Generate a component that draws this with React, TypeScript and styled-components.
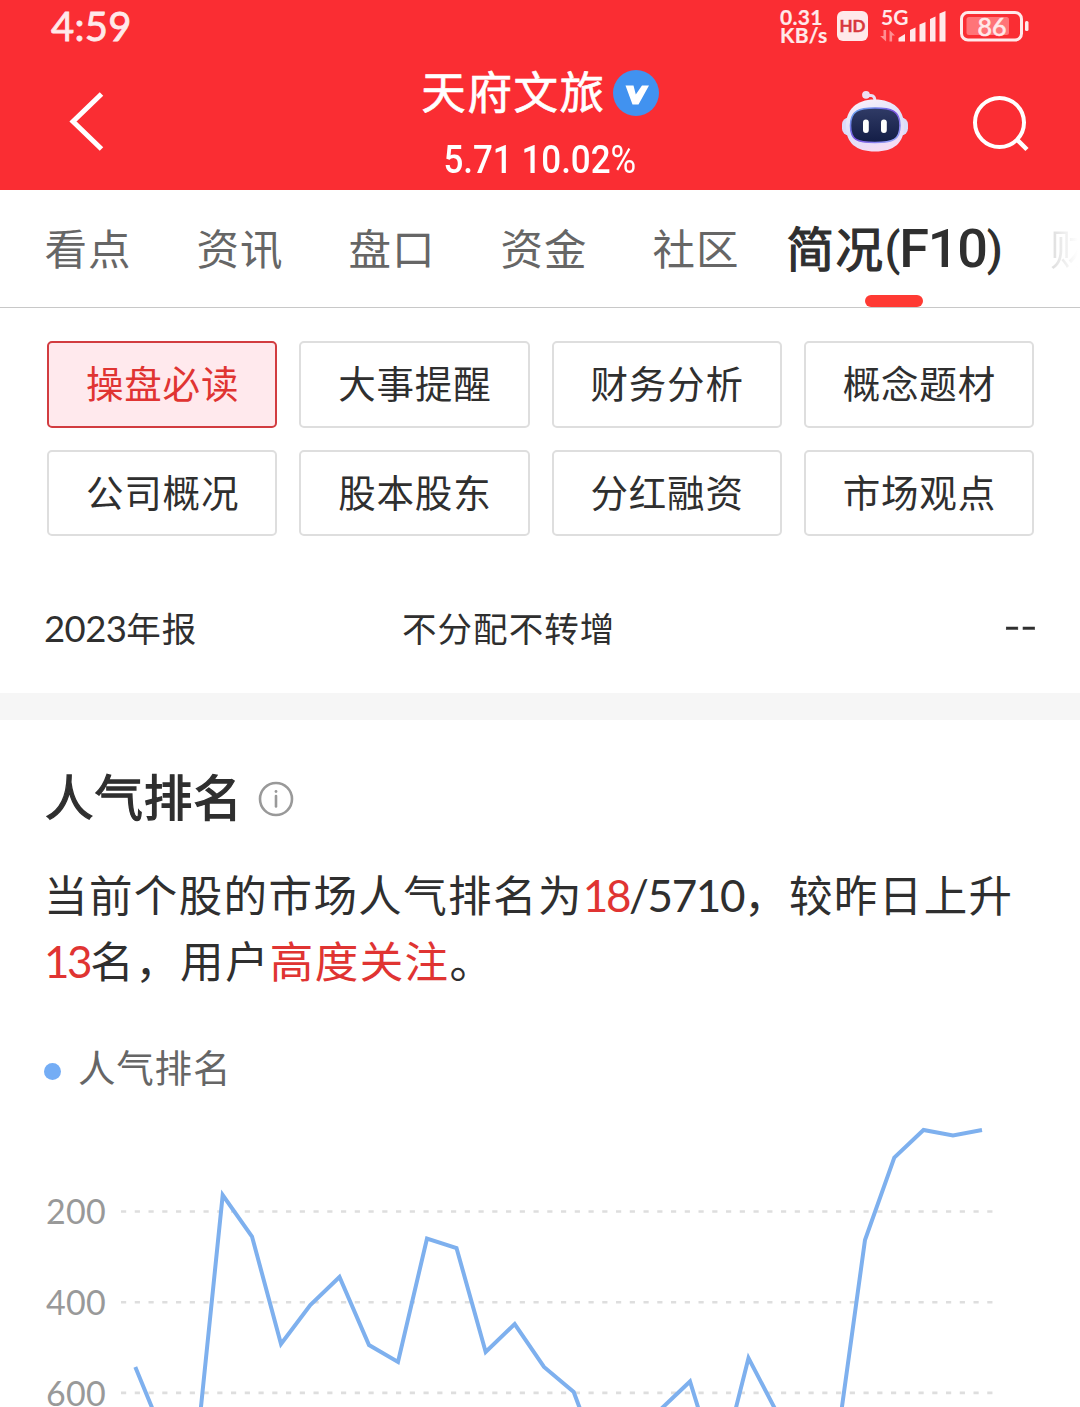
import React from 'react';
import styled, { createGlobalStyle, css } from 'styled-components';

const GlobalStyle = createGlobalStyle`
  *, *::before, *::after { box-sizing: border-box; }
  html, body { margin: 0; padding: 0; background: #fff; }
  body { overflow: hidden; }
  svg { display: block; flex: none; }
`;

const latin = `Lato, 'Noto Sans CJK SC', sans-serif`;
const cjk = `'Noto Sans CJK SC', sans-serif`;

const Screen = styled.main`
  width: 1080px;
  height: 1407px;
  overflow: hidden;
  background: #fff;
  color: #2f2f2f;
  font-family: ${cjk};
  white-space: nowrap;
`;

const Header = styled.header`
  height: 190px;
  background: #fa2d33;
  color: #fff;
`;

const StatusBar = styled.div`
  height: 52px;
  padding: 0 51px 0 51px;
  display: flex;
  justify-content: space-between;
  align-items: center;
  color: #ffe9ea;
  font-family: ${latin};
`;

const Clock = styled.span`
  font-size: 40px;
  line-height: 52px;
  font-weight: 400;
  letter-spacing: 0.3px;
  -webkit-text-stroke: 0.8px currentColor;
`;

const StatusIcons = styled.div`
  display: flex;
  align-items: center;
  height: 52px;
`;

const NetSpeed = styled.div`
  width: 57px;
  font-size: 21px;
  line-height: 18px;
  font-weight: 700;
  letter-spacing: 0.3px;
  -webkit-text-stroke: 0.2px currentColor;
`;

const SignalSlot = styled.div`
  margin: 0 12px 0 11px;
`;

const NavBar = styled.div`
  height: 138px;
  display: grid;
  grid-template-columns: 1fr auto 1fr;
`;

const NavLeft = styled.div`
  padding: 40px 0 0 69px;
`;

const NavRight = styled.div`
  padding: 38px 50px 0 0;
  display: flex;
  justify-content: flex-end;
  gap: 64px;

  svg + svg { margin-top: 4px; }
`;

const NavTitle = styled.div`
  display: flex;
  flex-direction: column;
  align-items: center;
`;

const StockName = styled.div`
  display: flex;
  align-items: center;
  gap: 7px;
  height: 82px;
`;

const StockNameText = styled.span`
  margin-top: -6px;
  font-size: 44.5px;
  line-height: 70px;
  font-weight: 400;
  letter-spacing: 1.6px;
  -webkit-text-stroke: 0.7px currentColor;
`;

const StockQuote = styled.div`
  font-family: Roboto, sans-serif;
  font-size: 38px;
  line-height: 50px;
  font-weight: 500;
  margin: 1px -10px 0;
  transform: scaleX(0.92);
`;

const Percent = styled.span`
  font-weight: 400;
`;

const Tabs = styled.nav`
  height: 118px;
  padding-left: 12px;
  display: flex;
  border-bottom: 1px solid #c8c8c8;
  overflow: hidden;
`;

const Tab = styled.div<{ $active?: boolean; $faded?: boolean }>`
  flex: none;
  display: flex;
  flex-direction: column;
  align-items: center;
  justify-content: space-between;
  padding: 0 32.5px;
  font-size: 42.5px;
  letter-spacing: 1px;
  color: #666;
  ${p => p.$active && css`
    padding: 0;
    width: 244px;
    font-size: 47.5px;
    letter-spacing: 1.5px;
    color: #2f2f2f;
    -webkit-text-stroke: 1.2px currentColor;
  `}
  ${p => p.$faded && css`
    padding-left: 34px;
    background: linear-gradient(90deg, #dcdcdc 34px, #fff 62px);
    background-clip: text;
    color: transparent;
  `}
`;

const TabLabel = styled.span`
  height: 105px;
  line-height: 113px;
`;

const TabCode = styled.span`
  font-family: Roboto, sans-serif;
  font-size: 54px;
  line-height: 0;
  font-weight: 500;
  letter-spacing: -1.2px;
  -webkit-text-stroke: 0;
`;

const Paren = styled.span`
  font-size: 46px;
  line-height: 0;
  vertical-align: 2px;
`;

const TabMarker = styled.i`
  width: 58px;
  height: 12px;
  border-radius: 6px;
  background: #ff3a33;
`;

const Shortcuts = styled.section`
  padding: 33px 46px 0 47px;
  display: grid;
  grid-template-columns: repeat(4, 1fr);
  grid-template-rows: 87px 86px;
  gap: 22px;
`;

const Shortcut = styled.button<{ $active?: boolean }>`
  padding: 0 0 5px 1px;
  border: 2px solid ${p => (p.$active ? '#d23c40' : '#dedede')};
  border-radius: 5px;
  background: ${p => (p.$active ? '#ffe9ed' : '#fff')};
  color: ${p => (p.$active ? '#e03432' : '#2f2f2f')};
  font: 400 37.5px/1 ${cjk};
  letter-spacing: 0.85px;
`;

const ReportRow = styled.div`
  height: 157px;
  padding: 66px 43px 0 45px;
  display: grid;
  grid-template-columns: 357px 1fr auto;
  font-size: 34.5px;
  line-height: 50px;
  letter-spacing: 1.05px;
`;

const YearDigits = styled.span`
  margin-left: -1px;
  font-family: Lato, sans-serif;
  font-size: 36.5px;
  line-height: 0;
  letter-spacing: -0.6px;
`;

const Dashes = styled.span`
  margin: -4px -1px 0 0;
  transform: scaleX(1.3);
  transform-origin: right;
  -webkit-text-stroke: 0.5px currentColor;
`;

const Band = styled.div`
  height: 27px;
  background: #f6f6f6;
`;

const Popularity = styled.section`
  padding-left: 45px;
`;

const SectionTitle = styled.h2`
  margin: 0;
  height: 113px;
  padding-top: 40px;
  display: flex;
  align-items: flex-start;
  gap: 15px;
  font-size: 48.5px;
  line-height: 70px;
  font-weight: 400;
  letter-spacing: 0.9px;
  -webkit-text-stroke: 1.3px currentColor;

  svg { margin-top: 21px; }
`;

const Summary = styled.p`
  margin: 0 0 0 -1px;
  height: 160px;
  padding-top: 28px;
  font-size: 43.5px;
  line-height: 66px;
  letter-spacing: 1.4px;
`;

const Figure = styled.span<{ $tight?: boolean }>`
  font-family: Lato, sans-serif;
  font-size: 44px;
  line-height: 0;
  letter-spacing: ${p => (p.$tight ? '-2.4px' : '-1.4px')};
`;

const Hot = styled.span`
  color: #e03432;
`;

const Legend = styled.div`
  height: 107px;
  padding: 44px 0 3px;
  display: flex;
  align-items: center;
  gap: 17px;
  font-size: 37.5px;
  line-height: 60px;
  letter-spacing: 0.8px;
  color: #666;
`;

const LegendText = styled.span`
  margin-top: -2px;
`;

const LegendDot = styled.i`
  width: 17px;
  height: 17px;
  margin: 9px 0 0 -1px;
  border-radius: 50%;
  background: #74adf5;
`;

const AxisText = styled.text`
  font-family: Lato, sans-serif;
  font-size: 34px;
  letter-spacing: 0.3px;
  text-anchor: end;
  fill: #999;
`;

const TABS = ['看点', '资讯', '盘口', '资金', '社区'];
const SHORTCUTS = ['操盘必读', '大事提醒', '财务分析', '概念题材', '公司概况', '股本股东', '分红融资', '市场观点'];

const RANK_POINTS: [number, number][] = [
  [135.3, 1367], [164.5, 1438], [193.8, 1477], [222.7, 1195], [252, 1236.5], [281, 1344], [310.3, 1305],
  [339.5, 1277], [369, 1345], [398, 1362], [427, 1238.5], [456.5, 1248], [485.7, 1352], [514.7, 1324],
  [544, 1367], [573.7, 1392], [603, 1470], [632, 1440], [661, 1409], [690, 1381.5], [719, 1475],
  [748.5, 1358], [777.7, 1414], [807, 1470], [836, 1450], [865, 1240], [894.3, 1157.5], [923.5, 1130],
  [953, 1135.5], [982, 1130],
];
const CHART_TOP = 1100;

const HdBadge = () => (
  <svg width="31" height="30" viewBox="0 0 31 30">
    <rect width="31" height="30" rx="6" fill="#ffe9ea" />
    <text x="15.5" y="21" textAnchor="middle" fontFamily="Lato, sans-serif" fontWeight="700" fontSize="17" fill="#d8383d" stroke="#d8383d" strokeWidth="0.4">HD</text>
  </svg>
);

const Signal = () => (
  <svg width="68" height="40" viewBox="879 6 68 40">
    <text x="881" y="24.500" fontFamily="Lato, sans-serif" fontWeight="700" fontSize="21" fill="#ffe9ea">5G</text>
    <g fill="#ff8e91">
      <path d="M883.500 30h2.600v11.500l-6-5.500h3.400zM889.500 41.500V30l5.500 5.500h-2.900v6z" />
    </g>
    <g fill="#ffe9ea">
      <path d="M898.500 41.500v-3.500l6.500-4v7.500zM910 41.500V30l5.500-2.500v14zM919.500 41.500V24.500l6-2.500v19.500zM930 41.500V19l5.500-2.500v25zM939.500 41.500V13.500l6-2.500v30.500z" />
    </g>
  </svg>
);

const Battery = () => (
  <svg width="70" height="32" viewBox="959 10 70 32">
    <rect x="961.500" y="12.500" width="60" height="27.500" rx="6.500" fill="none" stroke="#ffe9ea" strokeWidth="3" />
    <rect x="966.500" y="17" width="42.500" height="18" rx="2.500" fill="#ff7478" />
    <rect x="1025" y="21" width="3.500" height="10" rx="1.500" fill="#ffe9ea" />
    <text x="992" y="35.700" textAnchor="middle" fontFamily="Lato, sans-serif" fontWeight="400" fontSize="25" fill="#ffe9ea" stroke="#ffe9ea" strokeWidth="0.6">86</text>
  </svg>
);

const BackIcon = () => (
  <svg width="36" height="60" viewBox="69 92 36 60">
    <path d="M101.500 94L73 121.500L101.500 149" fill="none" stroke="#fff" strokeWidth="5" />
  </svg>
);

const VerifiedIcon = () => (
  <svg width="46" height="46" viewBox="0 0 46 46">
    <circle cx="23" cy="23" r="23" fill="#4192f0" />
    <path d="M12.500 15.500h8l2.300 9 6.200-9h7L25.500 34.500h-6z" fill="#fff" />
  </svg>
);

const RobotIcon = () => (
  <svg width="67" height="63" viewBox="841 90 67 63">
    <defs>
      <linearGradient id="shell" x1="0" y1="0" x2="0.400" y2="1">
        <stop offset="0" stopColor="#fff3fa" />
        <stop offset="0.600" stopColor="#dce0fa" />
        <stop offset="1" stopColor="#f3dcf4" />
      </linearGradient>
      <linearGradient id="rim" x1="0" y1="0" x2="1" y2="1">
        <stop offset="0" stopColor="#6cb6f5" />
        <stop offset="0.500" stopColor="#7a50e0" />
        <stop offset="1" stopColor="#9ab6ff" />
      </linearGradient>
      <linearGradient id="face" x1="0" y1="0" x2="0" y2="1">
        <stop offset="0" stopColor="#303b66" />
        <stop offset="1" stopColor="#131d46" />
      </linearGradient>
    </defs>
    <path d="M866 95.500h5q4 0 4 6" fill="none" stroke="#e9def5" strokeWidth="3" />
    <circle cx="866" cy="94.800" r="3.900" fill="#eedff3" />
    <rect x="842" y="117.500" width="66" height="18" rx="7" fill="#dbdcfa" />
    <path d="M874.500 99.500C894 99.500 904 110 904 126C904 143 894 151.500 875 151.500C856 151.500 846 143 846 126C846 110 856 99.500 874.500 99.500Z" fill="url(#shell)" />
    <path d="M875 108C891 108 900 110.500 900 125.500C900 140 893 142.500 875 142.500C857 142.500 850.500 140 850.500 125.500C850.500 110.500 859 108 875 108Z" fill="url(#face)" stroke="url(#rim)" strokeWidth="1.600" />
    <rect x="863" y="119.500" width="5.800" height="13.500" rx="2.900" fill="#fff" />
    <rect x="881" y="119.500" width="5.800" height="13.500" rx="2.900" fill="#fff" />
  </svg>
);

const SearchIcon = () => (
  <svg width="58" height="58" viewBox="972 94 58 58">
    <circle cx="999.500" cy="122.500" r="24.500" fill="none" stroke="#fff" strokeWidth="4" />
    <path d="M1017 139.500L1027 149.500" stroke="#fff" strokeWidth="4.500" />
  </svg>
);

const InfoIcon = () => (
  <svg width="36" height="36" viewBox="0 0 36 36">
    <circle cx="18" cy="18" r="16" fill="none" stroke="#999" strokeWidth="2.600" />
    <circle cx="18" cy="10.500" r="1.400" fill="#999" stroke="none" />
    <path d="M18 15V25.500" stroke="#999" strokeWidth="2.600" strokeLinecap="round" />
  </svg>
);

const RankChart = () => (
  <svg width="1035" height="307" viewBox={`45 ${CHART_TOP} 1035 307`}>
    {[200, 400, 600].map((rank, i) => {
      const y = 1211.5 + i * 90.7;
      return (
        <g key={rank}>
          <AxisText x="106" y={y + 12.8}>{rank}</AxisText>
          <path d={`M121 ${y}H993`} stroke="#dedede" strokeWidth="2.600" strokeDasharray="5.200 8.550" />
        </g>
      );
    })}
    <polyline points={RANK_POINTS.map(p => p.join(',')).join(' ')} fill="none" stroke="#7eb0ee" strokeWidth="4" strokeMiterlimit="10" />
  </svg>
);

export default function App() {
  return (
    <Screen>
      <GlobalStyle />
      <Header>
        <StatusBar>
          <Clock>4:59</Clock>
          <StatusIcons>
            <NetSpeed>0.31<br />KB/s</NetSpeed>
            <HdBadge />
            <SignalSlot><Signal /></SignalSlot>
            <Battery />
          </StatusIcons>
        </StatusBar>
        <NavBar>
          <NavLeft><BackIcon /></NavLeft>
          <NavTitle>
            <StockName><StockNameText>天府文旅</StockNameText><VerifiedIcon /></StockName>
            <StockQuote>5.71 10.02<Percent>%</Percent></StockQuote>
          </NavTitle>
          <NavRight><RobotIcon /><SearchIcon /></NavRight>
        </NavBar>
      </Header>
      <Tabs>
        {TABS.map(name => <Tab key={name}><TabLabel>{name}</TabLabel></Tab>)}
        <Tab $active>
          <TabLabel>简况<TabCode><Paren>(</Paren>F10<Paren>)</Paren></TabCode></TabLabel>
          <TabMarker />
        </Tab>
        <Tab $faded><TabLabel>财务</TabLabel></Tab>
      </Tabs>
      <Shortcuts>
        {SHORTCUTS.map((name, i) => <Shortcut key={name} $active={i === 0}>{name}</Shortcut>)}
      </Shortcuts>
      <ReportRow>
        <span><YearDigits>2023</YearDigits>年报</span>
        <span>不分配不转增</span>
        <Dashes>--</Dashes>
      </ReportRow>
      <Band />
      <Popularity>
        <SectionTitle>人气排名<InfoIcon /></SectionTitle>
        <Summary>
          当前个股的市场人气排名为<Hot><Figure $tight>18</Figure></Hot><Figure>/5710</Figure>，较昨日上升<br />
          <Hot><Figure $tight>13</Figure></Hot>名，用户<Hot>高度关注</Hot>。
        </Summary>
        <Legend><LegendDot /><LegendText>人气排名</LegendText></Legend>
        <RankChart />
      </Popularity>
    </Screen>
  );
}
